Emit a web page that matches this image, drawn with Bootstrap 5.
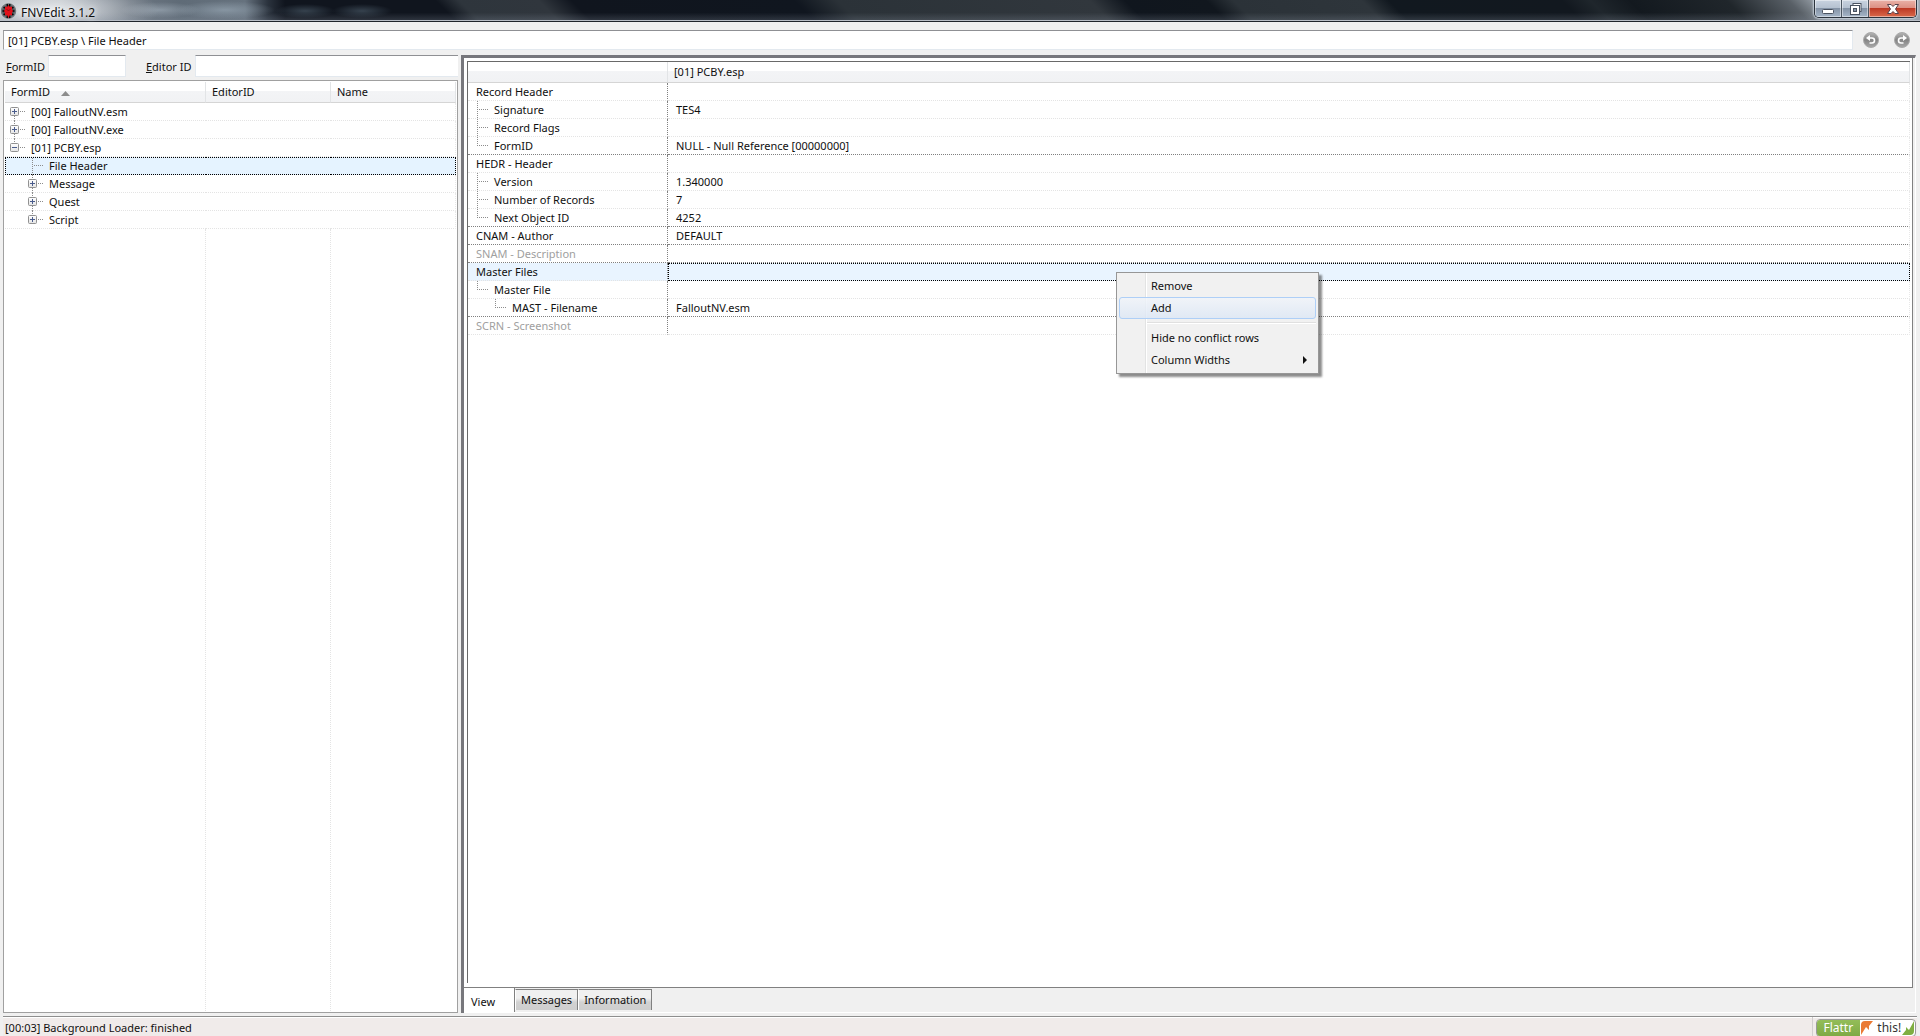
<!DOCTYPE html>
<html lang="en">
<head>
<meta charset="utf-8">
<meta name="viewport" content="width=device-width, initial-scale=1">
<title>FNVEdit 3.1.2</title>
<link href="https://cdn.jsdelivr.net/npm/bootstrap@5.3.0/dist/css/bootstrap.min.css" rel="stylesheet">
<style>
  body { font-family: "Noto Sans", "Open Sans", sans-serif; font-size: 11px; line-height: 16px; color: #101010; background: #f0f0f0; }
  button, input { font: inherit; color: inherit; }
  /* title bar */
  .titlebar { height: 22px; border-bottom: 1px solid #20252c; box-shadow: inset 0 -1px 0 #b9bec6; padding-left: 1px;
    background:
      linear-gradient(180deg, transparent 60%, rgba(150,160,175,.25)),
      radial-gradient(ellipse 110px 26px at 50px 10px, rgba(235,238,242,.85), transparent),
      radial-gradient(ellipse 40px 8px at 160px 10px, rgba(165,178,190,.6), transparent),
      radial-gradient(ellipse 50px 9px at 225px 10px, rgba(150,165,178,.7), transparent),
      radial-gradient(ellipse 30px 7px at 305px 11px, rgba(70,85,98,.7), transparent),
      radial-gradient(ellipse 30px 7px at 362px 11px, rgba(70,85,98,.7), transparent),
      linear-gradient(90deg, #a9adb2 0, #b4b8bc 60px, #8d959e 90px, #6c7681 130px, #5f6b77 180px, #66727e 245px, rgba(60,70,82,.6) 268px, transparent 285px),
      linear-gradient(45deg, #10151e 23.5%, #2e353c 24.7%, #30363d 28.8%, #10151e 30.5%, #10161f 42%, #2b3238 44.2%, #31373d 57.2%, #10161e 59%, #11171e 63.2%, #2b3238 64.6%, #2e353b 71.2%, #11181f 72.6%, #12181f 81.5%, #1f262c 83%, #13191f 85%, #20262b 90%, #596067 93.2%, #8c949c 94.4%, #9aa4ae 100%); }
  .titletext { font-size: 12px; text-shadow: 0 0 5px #fff, 0 0 8px #fff; }
  .winbtns { height: 18px; margin-right: 3px; border: 1px solid #2b333c; border-top: 0; border-radius: 0 0 5px 5px; overflow: hidden; box-shadow: 0 0 2px 1px rgba(225,235,245,.75); }
  .winbtn { width: 27px; border: 0; border-right: 1px solid #4b5661; padding: 0; display: flex; align-items: center; justify-content: center;
    background: linear-gradient(#c9d3e0 0, #b3c0cf 50%, #8493a6 50%, #a6b6c8 100%); box-shadow: inset 0 0 0 1px rgba(255,255,255,.45); }
  .winbtn-close { width: 47px; border-right: 0; background: linear-gradient(#eab2a8 0, #db8d80 50%, #bd3a25 50%, #d9694b 100%); }
  /* path bar */
  .pathbar { padding: 8px 10px 5px 3px; gap: 15px; }
  .sunken { border: 1px solid #e3e9ef; border-top-color: #8f9094; background: #fff; border-radius: 0; outline: 0; min-width: 0; }
  .pathfield { height: 20px; padding: 0 4px; border-left-color: #a0a0a0; margin-right: -5px; }
  .roundbtn { width: 16px; height: 16px; padding: 0; border: 0; background: none; display: flex; }
  /* panes */
  .sidepane { width: 455px; margin-left: 3px; flex: none; }
  .filters { height: 25px; padding-left: 3px; }
  .filters input { height: 22px; padding: 0 4px; }
  .formfield { width: 78px; margin: 0 20px 0 3px; }
  .namefield { margin-left: 3px; border-right: 0; }
  .treebox { border: 1px solid #a0a0a0; background: #fff; padding: 1px; }
  .gridtable { width: 100%; table-layout: fixed; border-collapse: separate; border-spacing: 0; }
  .gridtable th { height: 21px; padding: 0 6px; font-weight: 400; border-bottom: 1px solid #d5d5d5; border-right: 1px solid #e2e4e6; background: linear-gradient(#fff 45%, #f3f4f6 45%, #f1f2f4); line-height: 20px; }
  .gridtable td { height: 18px; padding: 0; line-height: 17px; border-bottom: 1px dotted #e4e4e4; white-space: nowrap; }
  .gridtable td:last-child { border-right: 1px dotted #e8e8e8; }
  .gridtable svg { flex: none; display: block; }
  .cellrow { display: flex; height: 17px; }
  .treebox .cellrow { gap: 6px; }
  .treebox .level2 { padding-left: 18px; }
  .treebox tr.picked td { background: #e5f3ff; border-top: 1px dotted #000; border-bottom: 1px dotted #000; }
  .treebox tr.picked td:first-child { border-left: 1px dotted #000; }
  .treebox tr.picked td:last-child { border-right: 1px dotted #000; }
  .treebox tr.picked .cellrow { height: 16px; margin-left: -1px; line-height: 16px; }
  .emptycols div { border-right: 1px dotted #e4e4e4; }
  .w-id { width: 201px; } .w-ed { width: 125px; }
  .splitter { width: 3px; flex: none; }
  .mainpane { border-left: 3px solid #77777c; border-top: 3px solid #77777c; border-right: 1px solid #fff; margin-right: 4px; background: #f0f0f0; min-width: 0; }
  .viewframe { border-right: 1px solid #808080; border-bottom: 1px solid #808080; background: #fff; padding: 3px 2px 4px 3px; margin-right: 2px; }
  .viewtable { border-left: 1px solid #696969; border-top: 1px solid #696969; }
  .viewtable td:first-child { border-right: 1px dotted #808080; padding-left: 8px; }
  .viewtable td + td { padding-left: 8px; }
  .viewtable th + th { padding-left: 6px; }
  .viewtable .ends td { border-bottom-color: #808080; }
  .viewtable .absent { color: #a0a0a0; }
  .viewtable .picked td { background: #e9f4ff; }
  .viewtable .picked td + td { border: 1px dotted #000; }
  .viewtable .level3 { padding-left: 18px; }
  .w-field { width: 200px; }
  /* bottom tabs */
  .tabstrip { height: 25px; border-bottom: 1px solid #fff; }
  .tabbtn { border: 1px solid #808080; border-left-color: #fff; border-bottom: 0; height: 21px; padding: 0 5px; margin-top: 1px; background: linear-gradient(#f0f0f0 40%, #d2d2d2 60%, #cecece); line-height: 18px; white-space: nowrap; }
  .tabbtn-on { height: 24px; width: 51px; margin-top: 0; padding: 3px 0 0 7px; text-align: left; background: #fff; border-top: 0; border-left: 0; }
  .statusline { height: 20px; margin: 3px 3px 0; border-top: 1px solid #8e8e8e; background: #f0ebea; box-shadow: inset 0 1px 0 #fff; padding-left: 2px; line-height: 21px; }
  .flattr { height: 18px; border: 1px solid #999; border-radius: 4px; background: #fff; color: #333; text-decoration: none; overflow: hidden; width: 100px; font-size: 12px; line-height: 16px; }
  .flattr-name { background: linear-gradient(#93bd58, #7faa45); color: #fff; width: 43px; text-align: center; }
  .flattrbox { border-left: 1px solid #d2cfcf; padding: 2px 1px 0 3px; }
  /* context menu */
  .popmenu { position: absolute; left: 1116px; top: 272px; width: 203px; border: 1px solid #979797; background: linear-gradient(90deg, #f1f1f1 28px, #e2e3e3 28px, #e2e3e3 29px, #fff 29px, #fff 30px, #f1f1f1 30px); padding: 2px; box-shadow: 3px 3px 2px rgba(0,0,0,.45); }
  .popmenu button { display: flex; align-items: center; justify-content: space-between; width: 100%; height: 22px; border: 1px solid transparent; border-radius: 3px; background: none; padding: 0 7px 0 31px; }
  .popmenu button.hot { border-color: #aecff7; background: linear-gradient(rgba(240,244,250,.8), rgba(220,231,245,.8)); }
  .popmenu hr { margin: 3px 0 3px 28px; border: 0; border-top: 1px solid #e0e0e0; border-bottom: 1px solid #fff; opacity: 1; }
</style>
<script src="https://cdn.jsdelivr.net/npm/bootstrap@5.3.0/dist/js/bootstrap.bundle.min.js"></script>
</head>
<body class="vh-100 d-flex flex-column overflow-hidden">
<svg width="0" height="0" class="position-absolute" aria-hidden="true">
  <defs>
    <linearGradient id="boxfill" x2="0" y2="1"><stop offset="0" stop-color="#fff"/><stop offset="1" stop-color="#e4e4e4"/></linearGradient>
    <linearGradient id="ball" x2="0" y2="1"><stop offset="0" stop-color="#b4b4b4"/><stop offset=".5" stop-color="#858585"/><stop offset="1" stop-color="#a8a8a8"/></linearGradient>
    <g id="dots-right" stroke="#8c8c8c" stroke-dasharray="1 1"><path d="M15 8.500h5"/></g>
    <g id="knob"><rect x="5.500" y="4.500" width="8" height="8" rx="1" fill="url(#boxfill)" stroke="#919191"/><path d="M7 8.500h5" stroke="#4a5c8c"/></g>
    <g id="knob-plus"><use href="#knob"/><path d="M9.500 6v5" stroke="#4a5c8c"/></g>
    <path id="up" d="M9.500 0v4" stroke="#8c8c8c" stroke-dasharray="1 1"/>
    <path id="down" d="M9.500 13v5" stroke="#8c8c8c" stroke-dasharray="1 1"/>
    <path id="tee" d="M1.500 0v18M3 8.500h9" stroke="#8c8c8c" stroke-dasharray="1 1" fill="none"/>
    <path id="elbow" d="M1.500 0v9M3 8.500h9" stroke="#8c8c8c" stroke-dasharray="1 1" fill="none"/>
  </defs>
</svg>

<header class="titlebar d-flex justify-content-between align-items-start">
  <div class="d-flex align-items-center gap-1">
    <svg width="16" height="21" viewBox="0 0 16 21"><circle cx="7.500" cy="11" r="7" fill="#50565a" stroke="#70777c" stroke-width="1.500"/><path d="M2.500 7l3 2M12.500 7l-3 2M1.500 11h12M2.500 15l3-2M12.500 15l-3-2M6 4l1 3M9 4L8 7M6 18l1-3M9 18l-1-3" stroke="#050505" stroke-width="1.500"/><path d="M7.500 5l1.500 2 2-.5v3l1 1.500-1 1.500v3l-2-.5-1.500 3-1.500-3-2 .5v-3L3 11l1-1.500v-3l2 .5z" fill="#e0101a"/><path d="M6 9.500l1 1M9 9.500l-1 1" stroke="#400"/></svg>
    <span class="titletext pt-1">FNVEdit 3.1.2</span>
  </div>
  <div class="winbtns d-flex">
    <button class="winbtn" aria-label="Minimize"><svg width="13" height="12"><rect x=".5" y="6.500" width="11" height="4" rx="1" fill="#fff" stroke="#4a5360"/></svg></button>
    <button class="winbtn" aria-label="Restore"><svg width="13" height="14"><rect x="4" y="1.500" width="8" height="8" fill="#fff" stroke="#4a5360"/><rect x="1.500" y="3.500" width="9" height="9" fill="#fff" stroke="#4a5360"/><rect x="4.500" y="6.500" width="3" height="3" fill="#8695a8" stroke="#4a5360"/></svg></button>
    <button class="winbtn winbtn-close" aria-label="Close"><svg width="14" height="12"><path d="M1.500 1.500h3.500l2 2 2-2h3.500L9.500 6l3 4.500H9l-2-2-2 2H1.500L4.500 6z" fill="#fff" stroke="#55404a"/></svg></button>
  </div>
</header>

<div class="pathbar d-flex align-items-center">
  <input class="sunken pathfield flex-grow-1" aria-label="Path" value="[01] PCBY.esp \ File Header" readonly>
  <button class="roundbtn" aria-label="Back"><svg width="16" height="16"><circle cx="8" cy="8" r="7.500" fill="url(#ball)" stroke="#aaa"/><path d="M5 6h4a2.300 2.300 0 0 1 0 5H6.500" fill="none" stroke="#fff" stroke-width="1.600"/><path d="M3 6l4-3v6z" fill="#fff"/></svg></button>
  <button class="roundbtn" aria-label="Forward"><svg width="16" height="16"><circle cx="8" cy="8" r="7.500" fill="url(#ball)" stroke="#aaa"/><path d="M11 6H7a2.300 2.300 0 0 0 0 5h2.500" fill="none" stroke="#fff" stroke-width="1.600"/><path d="M13 6L9 3v6z" fill="#fff"/></svg></button>
</div>

<main class="d-flex flex-grow-1 overflow-hidden">
  <section class="sidepane d-flex flex-column">
    <div class="filters d-flex align-items-start">
      <label for="fid" class="pt-1"><u>F</u>ormID</label><input id="fid" class="sunken formfield">
      <label for="eid" class="pt-1 text-nowrap"><u>E</u>ditor ID</label><input id="eid" class="sunken namefield flex-grow-1">
    </div>
    <div class="treebox flex-grow-1 d-flex flex-column">
      <table class="gridtable">
        <colgroup><col class="w-id"><col class="w-ed"><col></colgroup>
        <thead><tr><th>FormID <svg class="d-inline-block ms-2" width="9" height="5"><path d="M0 5l4.500-5L9 5z" fill="#8c8c8c"/></svg></th><th>EditorID</th><th>Name</th></tr></thead>
        <tbody>
          <tr><td><div class="cellrow"><svg width="20" height="18"><use href="#down"/><use href="#dots-right"/><use href="#knob-plus"/></svg>[00] FalloutNV.esm</div></td><td></td><td></td></tr>
          <tr><td><div class="cellrow"><svg width="20" height="18"><use href="#up"/><use href="#down"/><use href="#dots-right"/><use href="#knob-plus"/></svg>[00] FalloutNV.exe</div></td><td></td><td></td></tr>
          <tr><td><div class="cellrow"><svg width="20" height="18"><use href="#up"/><use href="#dots-right"/><use href="#knob"/></svg>[01] PCBY.esp</div></td><td></td><td></td></tr>
          <tr class="picked"><td><div class="cellrow level2"><svg width="20" height="17"><path d="M9.500 0v18M11 7.500h9" stroke="#8c8c8c" stroke-dasharray="1 1"/></svg>File Header</div></td><td></td><td></td></tr>
          <tr><td><div class="cellrow level2"><svg width="20" height="18"><use href="#up"/><use href="#down"/><use href="#dots-right"/><use href="#knob-plus"/></svg>Message</div></td><td></td><td></td></tr>
          <tr><td><div class="cellrow level2"><svg width="20" height="18"><use href="#up"/><use href="#down"/><use href="#dots-right"/><use href="#knob-plus"/></svg>Quest</div></td><td></td><td></td></tr>
          <tr><td><div class="cellrow level2"><svg width="20" height="18"><use href="#up"/><use href="#dots-right"/><use href="#knob-plus"/></svg>Script</div></td><td></td><td></td></tr>
        </tbody>
      </table>
      <div class="emptycols d-flex flex-grow-1"><div class="w-id"></div><div class="w-ed"></div></div>
    </div>
  </section>
  <div class="splitter"></div>
  <section class="mainpane flex-grow-1 d-flex flex-column">
    <div class="viewframe flex-grow-1 d-flex flex-column">
      <div class="viewtable flex-grow-1">
        <table class="gridtable">
          <colgroup><col class="w-field"><col></colgroup>
          <thead><tr><th></th><th>[01] PCBY.esp</th></tr></thead>
          <tbody>
            <tr><td>Record Header</td><td></td></tr>
            <tr><td><div class="cellrow"><svg width="18" height="18"><use href="#tee"/></svg>Signature</div></td><td>TES4</td></tr>
            <tr><td><div class="cellrow"><svg width="18" height="18"><use href="#tee"/></svg>Record Flags</div></td><td></td></tr>
            <tr class="ends"><td><div class="cellrow"><svg width="18" height="18"><use href="#elbow"/></svg>FormID</div></td><td>NULL - Null Reference [00000000]</td></tr>
            <tr><td>HEDR - Header</td><td></td></tr>
            <tr><td><div class="cellrow"><svg width="18" height="18"><use href="#tee"/></svg>Version</div></td><td>1.340000</td></tr>
            <tr><td><div class="cellrow"><svg width="18" height="18"><use href="#tee"/></svg>Number of Records</div></td><td>7</td></tr>
            <tr class="ends"><td><div class="cellrow"><svg width="18" height="18"><use href="#elbow"/></svg>Next Object ID</div></td><td>4252</td></tr>
            <tr class="ends"><td>CNAM - Author</td><td>DEFAULT</td></tr>
            <tr class="ends"><td class="absent">SNAM - Description</td><td></td></tr>
            <tr class="picked"><td>Master Files</td><td></td></tr>
            <tr><td><div class="cellrow"><svg width="18" height="18"><use href="#elbow"/></svg>Master File</div></td><td></td></tr>
            <tr class="ends"><td><div class="cellrow level3"><svg width="18" height="18"><use href="#elbow"/></svg>MAST - Filename</div></td><td>FalloutNV.esm</td></tr>
            <tr><td class="absent">SCRN - Screenshot</td><td></td></tr>
          </tbody>
        </table>
      </div>
    </div>
    <nav class="tabstrip d-flex align-items-start">
      <button class="tabbtn tabbtn-on">View</button><button class="tabbtn">Messages</button><button class="tabbtn">Information</button>
    </nav>
  </section>
</main>

<footer class="statusline d-flex justify-content-between align-items-stretch">
  <span>[00:03] Background Loader: finished</span>
  <div class="flattrbox"><a href="#" class="flattr d-flex"><span class="flattr-name">Flattr</span><svg width="14" height="16"><path d="M1 15V5q0-4 4-4h8L9 6v4L6 7z" fill="#ea7a35"/></svg><span class="ms-1">this!</span><svg width="14" height="16" class="ms-auto"><path d="M13 1v10q0 4-4 4H1l4-5V7l3 3z" fill="#7fae42"/></svg></a></div>
</footer>

<div class="popmenu" role="menu">
  <button role="menuitem">Remove</button>
  <button role="menuitem" class="hot">Add</button>
  <hr>
  <button role="menuitem">Hide no conflict rows</button>
  <button role="menuitem">Column Widths <svg width="5" height="8"><path d="M0 0l4 4-4 4z" fill="#111"/></svg></button>
</div>
</body>
</html>
